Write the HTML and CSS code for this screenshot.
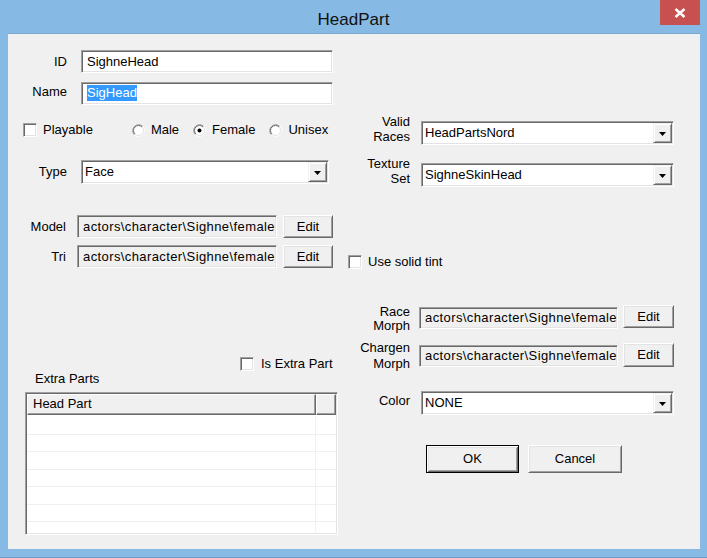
FILE: index.html
```html
<!DOCTYPE html>
<html>
<head>
<meta charset="utf-8">
<title>HeadPart</title>
<link rel="stylesheet" href="styles.css">
</head>
<body>
<div class="window">
  <div class="titlebar">
    <span class="title">HeadPart</span>
    <div class="close">
      <svg width="12" height="10" viewBox="0 0 12 10"><path d="M1.5 1 L10.5 9 M10.5 1 L1.5 9" stroke="#fff" stroke-width="2.4" fill="none"/></svg>
    </div>
  </div>
  <div class="client">
    <div class="col-left">
      <div class="row row-id">
        <span class="lbl lbl-a">ID</span>
        <div class="edit edit-wide">SighneHead</div>
      </div>
      <div class="row row-name">
        <span class="lbl lbl-a lbl-up">Name</span>
        <div class="edit edit-wide"><span class="sel">SigHead</span></div>
      </div>
      <div class="row row-flags">
        <span class="check"><span class="cbox"></span>Playable</span>
        <span class="radios">
          <span class="radio">
            <svg width="13" height="13" viewBox="0 0 13 13"><circle cx="6.5" cy="6.5" r="5" fill="#fff"/><path d="M2.26 10.74 A6 6 0 0 1 10.74 2.26" stroke="#a0a0a0" fill="none"/><path d="M10.74 2.26 A6 6 0 0 1 2.26 10.74" stroke="#fff" fill="none"/><path d="M2.96 10.04 A5 5 0 0 1 10.04 2.96" stroke="#696969" fill="none"/><path d="M10.04 2.96 A5 5 0 0 1 2.96 10.04" stroke="#e3e3e3" fill="none"/></svg>
            Male
          </span>
          <span class="radio">
            <svg width="13" height="13" viewBox="0 0 13 13"><circle cx="6.5" cy="6.5" r="5" fill="#fff"/><path d="M2.26 10.74 A6 6 0 0 1 10.74 2.26" stroke="#a0a0a0" fill="none"/><path d="M10.74 2.26 A6 6 0 0 1 2.26 10.74" stroke="#fff" fill="none"/><path d="M2.96 10.04 A5 5 0 0 1 10.04 2.96" stroke="#696969" fill="none"/><path d="M10.04 2.96 A5 5 0 0 1 2.96 10.04" stroke="#e3e3e3" fill="none"/><circle cx="6.5" cy="6.5" r="2" fill="#000"/></svg>
            Female
          </span>
          <span class="radio">
            <svg width="13" height="13" viewBox="0 0 13 13"><circle cx="6.5" cy="6.5" r="5" fill="#fff"/><path d="M2.26 10.74 A6 6 0 0 1 10.74 2.26" stroke="#a0a0a0" fill="none"/><path d="M10.74 2.26 A6 6 0 0 1 2.26 10.74" stroke="#fff" fill="none"/><path d="M2.96 10.04 A5 5 0 0 1 10.04 2.96" stroke="#696969" fill="none"/><path d="M10.04 2.96 A5 5 0 0 1 2.96 10.04" stroke="#e3e3e3" fill="none"/></svg>
            Unisex
          </span>
        </span>
      </div>
      <div class="row row-type">
        <span class="lbl lbl-a">Type</span>
        <div class="combo combo-type">
          <span class="combo-text">Face</span>
          <span class="dd"><svg width="7" height="4" viewBox="0 0 7 4"><polygon points="0,0 7,0 3.5,4" fill="#000"/></svg></span>
        </div>
      </div>
      <div class="row row-model">
        <span class="lbl lbl-b">Model</span>
        <div class="edit ro ro-left">actors\character\Sighne\female</div>
        <button class="btn btn-edit">Edit</button>
      </div>
      <div class="row row-tri">
        <span class="lbl lbl-b">Tri</span>
        <div class="edit ro ro-left">actors\character\Sighne\female</div>
        <button class="btn btn-edit">Edit</button>
        <span class="check tint"><span class="cbox"></span>Use solid tint</span>
      </div>
      <div class="row row-extra">
        <span class="check"><span class="cbox"></span><span class="clip">Is Extra Part</span></span>
      </div>
      <div class="extra-label">Extra Parts</div>
      <div class="list">
        <div class="lv-head">
          <div class="lv-h lv-c1">Head Part</div>
          <div class="lv-h lv-c2"></div>
        </div>
        <div class="lv-body">
          <div class="lv-row"><div class="lv-cell"></div><div class="lv-cell2"></div></div>
          <div class="lv-row"><div class="lv-cell"></div><div class="lv-cell2"></div></div>
          <div class="lv-row"><div class="lv-cell"></div><div class="lv-cell2"></div></div>
          <div class="lv-row"><div class="lv-cell"></div><div class="lv-cell2"></div></div>
          <div class="lv-row"><div class="lv-cell"></div><div class="lv-cell2"></div></div>
          <div class="lv-row"><div class="lv-cell"></div><div class="lv-cell2"></div></div>
          <div class="lv-row"><div class="lv-cell"></div><div class="lv-cell2"></div></div>
        </div>
      </div>
    </div>

    <div class="col-right">
      <div class="rrow rrow-races">
        <span class="rlbl lh15">Valid<br>Races</span>
        <div class="combo combo-r mt7">
          <span class="combo-text">HeadPartsNord</span>
          <span class="dd"><svg width="7" height="4" viewBox="0 0 7 4"><polygon points="0,0 7,0 3.5,4" fill="#000"/></svg></span>
        </div>
      </div>
      <div class="rrow rrow-texture">
        <span class="rlbl lh15">Texture<br>Set</span>
        <div class="combo combo-r mt7">
          <span class="combo-text">SighneSkinHead</span>
          <span class="dd"><svg width="7" height="4" viewBox="0 0 7 4"><polygon points="0,0 7,0 3.5,4" fill="#000"/></svg></span>
        </div>
      </div>
      <div class="rrow rrow-racemorph">
        <span class="rlbl rlbl-m lh14">Race<br>Morph</span>
        <div class="edit ro ro-right mt2">actors\character\Sighne\female</div>
        <button class="btn btn-edit-r">Edit</button>
      </div>
      <div class="rrow rrow-chargen">
        <span class="rlbl rlbl-m lh16">Chargen<br>Morph</span>
        <div class="edit ro ro-right mt5">actors\character\Sighne\female</div>
        <button class="btn btn-edit-r tall mt3">Edit</button>
      </div>
      <div class="rrow rrow-color">
        <span class="rlbl lh16 mt2">Color</span>
        <div class="combo combo-r">
          <span class="combo-text">NONE</span>
          <span class="dd"><svg width="7" height="4" viewBox="0 0 7 4"><polygon points="0,0 7,0 3.5,4" fill="#000"/></svg></span>
        </div>
      </div>
      <div class="rrow rrow-buttons">
        <button class="btn btn-ok">OK</button>
        <button class="btn btn-cancel">Cancel</button>
      </div>
    </div>
  </div>
</div>
</body>
</html>
```

FILE: styles.css
```css
* { box-sizing: border-box; }
html, body { margin: 0; padding: 0; }
body {
  width: 707px;
  height: 558px;
  overflow: hidden;
  font-family: "Liberation Sans", Arial, sans-serif;
  font-size: 13px;
  color: #000;
  background: #86b9e3;
}
.window {
  position: relative;
  width: 707px;
  height: 558px;
  background: #86b9e3;
  display: flex;
  flex-direction: column;
  box-shadow: inset 0 -1px #6f9cc6;
}
.titlebar {
  height: 34px;
  flex-shrink: 0;
  display: flex;
  align-items: center;
  justify-content: center;
  padding-top: 5px;
}
.title {
  font-size: 17px;
  line-height: 20px;
  color: #111;
}
.close {
  position: absolute;
  left: 660px;
  top: 0;
  width: 40px;
  height: 25px;
  background: #c75050;
  display: flex;
  align-items: center;
  justify-content: center;
}
.close svg { display: block; }

.client {
  margin: 0 7px 0 8px;
  height: 515px;
  background: #f0f0f0;
  display: flex;
  padding-left: 15px;
  box-shadow: 0 -1px #79a8d3;
}

/* ---------- left column ---------- */
.col-left {
  width: 315px;
  flex-shrink: 0;
  display: flex;
  flex-direction: column;
}
.row {
  display: flex;
  align-items: center;
  flex-shrink: 0;
  white-space: nowrap;
}
.row > * { flex-shrink: 0; }
.row-id { margin-top: 16px; height: 23px; }
.row-name { margin-top: 9px; height: 23px; }
.row-flags { margin-top: 17px; height: 16px; }
.row-type { margin-top: 22px; height: 24px; }
.row-model { margin-top: 31px; height: 23px; }
.row-tri { margin-top: 7px; height: 23px; }
.row-extra { margin-top: 88px; height: 16px; padding-left: 217px; }

.lbl { line-height: 16px; text-align: right; }
.lbl-a { width: 44px; margin-right: 14px; }
.lbl-b { width: 43px; margin-right: 11px; }
.lbl-up { margin-top: -3px; }

.edit {
  height: 23px;
  border: 1px solid;
  border-color: #a0a0a0 #fff #fff #a0a0a0;
  box-shadow: inset 1px 1px #696969, inset -1px -1px #e3e3e3;
  background: #fff;
  display: flex;
  align-items: center;
  padding: 1px 2px 1px 5px;
  overflow: hidden;
  white-space: nowrap;
  line-height: 16px;
}
.edit-wide { width: 252px; }
.sel {
  display: inline-block;
  background: #3399ff;
  color: #fff;
  line-height: 16px;
  margin-top: -2px;
}
.ro {
  background: #f0f0f0;
  letter-spacing: 0.4px;
  height: 22px;
}
.ro-left { width: 200px; margin-right: 6px; height: 23px; }
.ro-right { width: 199px; margin-right: 5px; }

.check {
  display: flex;
  align-items: center;
  gap: 6px;
  line-height: 16px;
}
.cbox {
  width: 14px;
  height: 14px;
  flex-shrink: 0;
  border: 1px solid;
  border-color: #a0a0a0 #fff #fff #a0a0a0;
  box-shadow: inset 1px 1px #696969, inset -1px -1px #e3e3e3;
  background: #fff;
}
.radios {
  display: flex;
  gap: 14px;
  margin-left: 39px;
}
.radio {
  display: flex;
  align-items: center;
  gap: 6px;
  line-height: 16px;
}
.radio svg { display: block; flex-shrink: 0; }

.tint {
  margin-left: 15px;
  align-self: flex-end;
  margin-bottom: -2px;
}
.clip {
  display: inline-block;
  width: 73px;
  overflow: hidden;
  margin-left: 1px;
}

.combo {
  height: 24px;
  border: 1px solid;
  border-color: #a0a0a0 #fff #fff #a0a0a0;
  box-shadow: inset 1px 1px #696969, inset -1px -1px #e3e3e3;
  background: #fff;
  display: flex;
  align-items: center;
  padding: 1px 1px 1px 3px;
  white-space: nowrap;
}
.combo-type { width: 248px; }
.combo-text { flex: 1; line-height: 16px; overflow: hidden; }
.dd {
  width: 19px;
  height: 20px;
  flex-shrink: 0;
  border: 1px solid;
  border-color: #f0f0f0 #696969 #696969 #f0f0f0;
  box-shadow: inset 1px 1px #fff, inset -1px -1px #a0a0a0;
  background: #f0f0f0;
  display: flex;
  align-items: center;
  justify-content: center;
  padding-top: 1px;
}
.dd svg { display: block; }

.btn {
  font: inherit;
  color: #000;
  padding: 0;
  margin: 0;
  height: 23px;
  border: 1px solid;
  border-color: #fff #696969 #696969 #fff;
  box-shadow: inset 1px 1px #e3e3e3, inset -1px -1px #a0a0a0;
  background: #f0f0f0;
  display: flex;
  align-items: center;
  justify-content: center;
  line-height: 16px;
}
.btn-edit { width: 50px; }
.btn-edit-r { width: 51px; }
.tall { height: 24px; }

.extra-label {
  height: 16px;
  line-height: 16px;
  padding-left: 12px;
  margin-top: -1px;
}

.list {
  margin-top: 5px;
  margin-left: 2px;
  width: 313px;
  height: 143px;
  flex-shrink: 0;
  border: 1px solid;
  border-color: #a0a0a0 #fff #fff #a0a0a0;
  box-shadow: inset 1px 1px #696969, inset -1px -1px #e3e3e3;
  background: #fff;
  padding: 1px;
  display: flex;
  flex-direction: column;
  overflow: hidden;
}
.lv-head {
  display: flex;
  height: 21px;
  flex-shrink: 0;
}
.lv-h {
  height: 21px;
  border: 1px solid;
  border-color: #fff #696969 #696969 #fff;
  box-shadow: inset -1px -1px #a0a0a0;
  background: #f0f0f0;
  line-height: 18px;
  white-space: nowrap;
}
.lv-c1 { width: 289px; padding-left: 5px; }
.lv-c2 { flex: 1; }
.lv-body {
  padding-top: 2px;
  display: flex;
  flex-direction: column;
}
.lv-row {
  display: flex;
  height: 17.5px;
  flex-shrink: 0;
  border-bottom: 1px solid #f0f0f0;
}
.lv-cell { width: 289px; border-right: 1px solid #f0f0f0; }
.lv-cell2 { flex: 1; }

/* ---------- right column ---------- */
.col-right {
  width: 317px;
  margin-left: 20px;
  flex-shrink: 0;
  display: flex;
  flex-direction: column;
}
.rrow {
  display: flex;
  align-items: flex-start;
  flex-shrink: 0;
  white-space: nowrap;
}
.rrow > * { flex-shrink: 0; }
.rlbl {
  width: 52px;
  margin-right: 11px;
  text-align: right;
}
.rlbl-m { margin-right: 9px; }
.lh14 { line-height: 14px; }
.lh15 { line-height: 15px; }
.lh16 { line-height: 16px; }
.mt2 { margin-top: 2px; }
.mt3 { margin-top: 3px; }
.mt5 { margin-top: 5px; }
.mt7 { margin-top: 7px; }
.combo-r { width: 253px; }

.rrow-races { margin-top: 80px; }
.rrow-texture { margin-top: 11px; }
.rrow-racemorph { margin-top: 118px; }
.rrow-chargen { margin-top: 7px; }
.rrow-color { margin-top: 19px; }
.rrow-buttons {
  margin-top: 30px;
  padding-left: 68px;
  gap: 9px;
}
.btn-ok {
  width: 93px;
  height: 28px;
  border: 1px solid #000;
  box-shadow: inset 1px 1px #fff, inset -1px -1px #696969, inset 2px 2px #e3e3e3, inset -2px -2px #a0a0a0;
}
.btn-cancel {
  width: 94px;
  height: 28px;
}
```
